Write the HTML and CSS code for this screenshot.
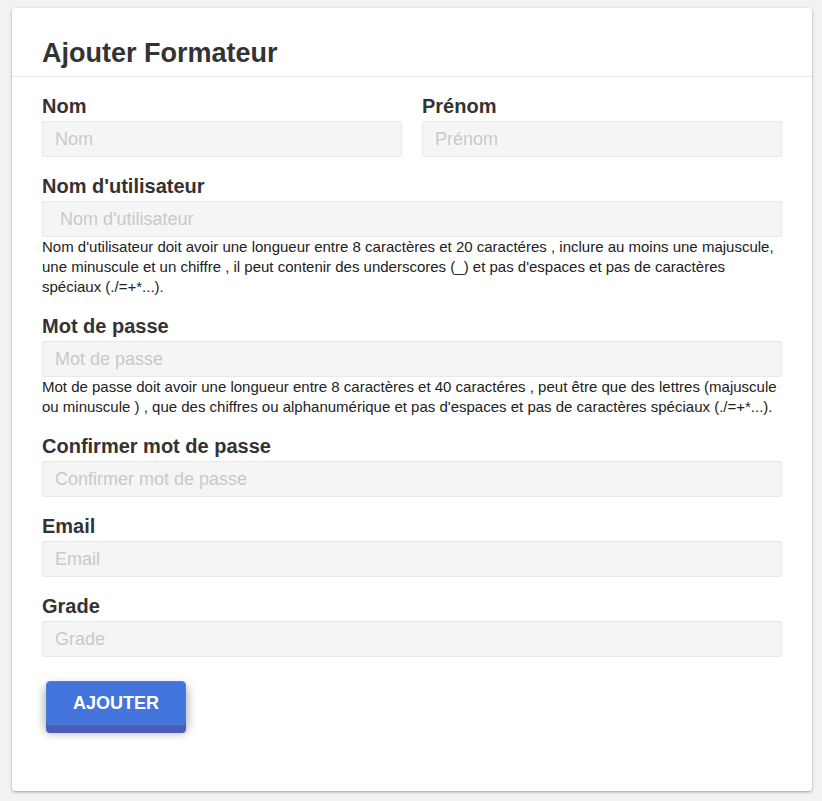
FILE: index.html
```html
<!DOCTYPE html>
<html lang="fr">
<head>
<meta charset="utf-8">
<title>Ajouter Formateur</title>
<link rel="stylesheet" href="styles.css">
</head>
<body>
<div class="card">
  <div class="card-header">
    <h1 class="title">Ajouter Formateur</h1>
  </div>
  <form class="card-body">
    <div class="row">
      <div class="group">
        <label class="label">Nom</label>
        <input class="input" type="text" placeholder="Nom">
      </div>
      <div class="group">
        <label class="label">Prénom</label>
        <input class="input" type="text" placeholder="Prénom">
      </div>
    </div>
    <div class="group">
      <label class="label">Nom d'utilisateur</label>
      <input class="input input-wide" type="text" placeholder="Nom d'utilisateur">
      <p class="help">Nom d'utilisateur doit avoir une longueur entre 8 caractères et 20 caractéres , inclure au moins une majuscule, une minuscule et un chiffre , il peut contenir des underscores (_) et pas d'espaces et pas de caractères spéciaux (./=+*...).</p>
    </div>
    <div class="group">
      <label class="label">Mot de passe</label>
      <input class="input" type="password" placeholder="Mot de passe">
      <p class="help">Mot de passe doit avoir une longueur entre 8 caractères et 40 caractéres , peut être que des lettres (majuscule ou minuscule ) , que des chiffres ou alphanumérique et pas d'espaces et pas de caractères spéciaux (./=+*...).</p>
    </div>
    <div class="group">
      <label class="label">Confirmer mot de passe</label>
      <input class="input" type="password" placeholder="Confirmer mot de passe">
    </div>
    <div class="group">
      <label class="label">Email</label>
      <input class="input" type="email" placeholder="Email">
    </div>
    <div class="group">
      <label class="label">Grade</label>
      <input class="input" type="text" placeholder="Grade">
    </div>
    <div class="actions">
      <button class="btn" type="button">AJOUTER</button>
    </div>
  </form>
</div>
</body>
</html>
```
FILE: styles.css
```css
* { box-sizing: border-box; }
html, body { margin: 0; padding: 0; }
body {
  background: #f2f2f2;
  font-family: "Liberation Sans", Arial, sans-serif;
  color: #333;
  padding: 8px 10px 10px 12px;
}
.card {
  width: 800px;
  background: #fff;
  border-radius: 3px;
  box-shadow: 0 1px 3px rgba(0,0,0,0.35);
}
.card-header {
  padding: 29px 30px 7px;
  border-bottom: 1px solid #e6e6e6;
}
.title {
  margin: 0;
  font-size: 27px;
  line-height: 32px;
  font-weight: bold;
  color: #333;
}
.card-body {
  padding: 17px 30px 66px;
  display: flex;
  flex-direction: column;
}
.row {
  display: grid;
  grid-template-columns: 1fr 1fr;
  column-gap: 20px;
}
.group {
  display: flex;
  flex-direction: column;
  margin-bottom: 17px;
}
.label {
  font-size: 20px;
  line-height: 24px;
  font-weight: bold;
  color: #333;
  margin-bottom: 3px;
}
.input {
  height: 36px;
  width: 100%;
  background: #f5f5f5;
  border: 1px solid #e9e9e9;
  border-radius: 2px;
  padding: 0 12px;
  font-family: "Liberation Sans", Arial, sans-serif;
  font-size: 18px;
  color: #333;
  outline: none;
}
.input-wide { padding-left: 17px; }
.input::placeholder { color: #c9c9c9; }
.help {
  margin: 0;
  font-size: 15px;
  line-height: 20px;
  color: #222;
}
.actions {
  margin-top: 7px;
  padding-left: 4px;
}
.btn {
  width: 140px;
  height: 44px;
  background: #4374db;
  border: 1px solid #4a80d2;
  border-radius: 4px;
  color: #fff;
  font-family: "Liberation Sans", Arial, sans-serif;
  font-size: 18px;
  font-weight: bold;
  box-shadow: 0 8px 0 #4d5bbd, 0 6px 10px 2px rgba(0,0,0,0.3);
  cursor: pointer;
  padding: 0;
}
```
